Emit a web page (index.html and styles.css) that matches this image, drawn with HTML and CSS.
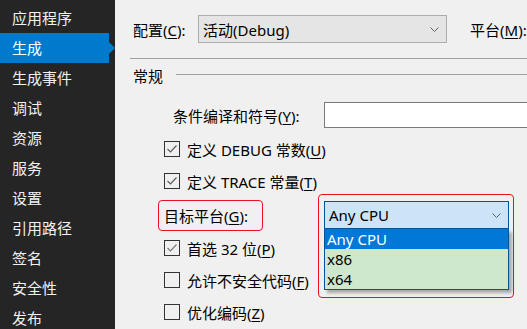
FILE: index.html
```html
<!DOCTYPE html>
<html lang="zh-CN">
<head>
<meta charset="utf-8">
<title>生成</title>
<link rel="stylesheet" href="styles.css">
</head>
<body>
<div class="app">
  <nav class="sidebar">
    <div class="nav-item">应用程序</div>
    <div class="nav-item active">生成</div>
    <div class="nav-item">生成事件</div>
    <div class="nav-item">调试</div>
    <div class="nav-item">资源</div>
    <div class="nav-item">服务</div>
    <div class="nav-item">设置</div>
    <div class="nav-item">引用路径</div>
    <div class="nav-item">签名</div>
    <div class="nav-item">安全性</div>
    <div class="nav-item">发布</div>
  </nav>
  <main class="main">
    <div class="config-row">
      <span class="config-label">配置(<u>C</u>):</span>
      <div class="select top-select">
        <span class="select-text">活动(Debug)</span>
        <svg class="chevron" width="9" height="5" viewBox="0 0 9 5"><path d="M0.5 0.5 L4.5 4.5 L8.5 0.5" fill="none" stroke="#606060" stroke-width="1"/></svg>
      </div>
      <span class="platform-label">平台(<u>M</u>):</span>
    </div>
    <div class="sep"></div>
    <div class="section-head">
      <span class="section-title">常规</span>
      <div class="section-line"></div>
    </div>
    <div class="symbols-row">
      <span class="symbols-label">条件编译和符号(<u>Y</u>):</span>
      <div class="text-input"></div>
    </div>
    <div class="check-row">
      <span class="checkbox"><svg width="14" height="14" viewBox="0 0 14 14"><path d="M2.5 7 L5.5 10 L11.5 3.5" fill="none" stroke="#5a5a5a" stroke-width="1.2"/></svg></span>
      <span>定义 DEBUG 常数(<u>U</u>)</span>
    </div>
    <div class="check-row">
      <span class="checkbox"><svg width="14" height="14" viewBox="0 0 14 14"><path d="M2.5 7 L5.5 10 L11.5 3.5" fill="none" stroke="#5a5a5a" stroke-width="1.2"/></svg></span>
      <span>定义 TRACE 常量(<u>T</u>)</span>
    </div>
    <div class="target-row">
      <div class="target-label">目标平台(<u>G</u>):</div>
      <div class="combo-wrap">
        <div class="select combo">
          <span class="select-text">Any CPU</span>
          <svg class="chevron" width="9" height="5" viewBox="0 0 9 5"><path d="M0.5 0.5 L4.5 4.5 L8.5 0.5" fill="none" stroke="#606060" stroke-width="1"/></svg>
        </div>
        <div class="combo-list">
          <div class="combo-option selected">Any CPU</div>
          <div class="combo-option">x86</div>
          <div class="combo-option">x64</div>
        </div>
        <div class="highlight-box"></div>
      </div>
    </div>
    <div class="check-row tight">
      <span class="checkbox"><svg width="14" height="14" viewBox="0 0 14 14"><path d="M2.5 7 L5.5 10 L11.5 3.5" fill="none" stroke="#7a7a7a" stroke-width="1.2"/></svg></span>
      <span>首选 32 位(<u>P</u>)</span>
    </div>
    <div class="check-row">
      <span class="checkbox"></span>
      <span>允许不安全代码(<u>F</u>)</span>
    </div>
    <div class="check-row">
      <span class="checkbox"></span>
      <span>优化编码(<u>Z</u>)</span>
    </div>
  </main>
</div>
</body>
</html>
```

FILE: styles.css
```css
html, body {
  margin: 0;
  padding: 0;
}
body {
  width: 527px;
  height: 329px;
  overflow: hidden;
  font-family: "Noto Sans", "Noto Sans CJK SC", sans-serif;
  font-size: 15px;
  color: #000;
}
u {
  text-decoration-thickness: 1px;
  text-underline-offset: 2px;
}
.app {
  display: flex;
  width: 527px;
  height: 329px;
}
.sidebar {
  width: 115px;
  flex: none;
  background: #252526;
  padding-top: 3px;
  box-sizing: border-box;
}
.nav-item {
  height: 30px;
  line-height: 30px;
  padding-left: 12px;
  color: #f1f1f1;
  white-space: nowrap;
  margin-right: 6px;
  position: relative;
}
.nav-item.active {
  background: #007acc;
  color: #fff;
}
.nav-item.active::after {
  content: "";
  position: absolute;
  right: -6px;
  top: 9px;
  border-top: 6px solid transparent;
  border-bottom: 6px solid transparent;
  border-left: 6px solid #007acc;
}
.main {
  flex: 1;
  background: #f0f0f0;
  overflow: hidden;
  padding-top: 15px;
  white-space: nowrap;
}
.config-row {
  display: flex;
  align-items: center;
  height: 28px;
  padding-left: 18px;
}
.config-label {
  width: 65px;
  flex: none;
}
.select {
  display: flex;
  align-items: center;
  box-sizing: border-box;
  flex: none;
}
.select-text {
  flex: 1;
}
.top-select {
  width: 249px;
  height: 28px;
  background: #e5e5e5;
  border: 1px solid #adadad;
  padding: 0 7px 0 4px;
}
.platform-label {
  margin-left: 23px;
}
.sep {
  height: 1px;
  background: #a0a0a0;
  margin: 15px 0 0 15px;
}
.section-head {
  display: flex;
  align-items: center;
  height: 32px;
  padding-left: 18px;
}
.section-line {
  flex: 1;
  height: 1px;
  background: #a0a0a0;
  margin-left: 13px;
  margin-top: -1px;
}
.symbols-row {
  display: flex;
  align-items: center;
  height: 26px;
  margin-top: 11px;
  padding-left: 58px;
}
.symbols-label {
  width: 151px;
  flex: none;
}
.text-input {
  width: 260px;
  height: 26px;
  flex: none;
  box-sizing: border-box;
  background: #fff;
  border: 1px solid #7a7a7a;
}
.check-row {
  display: flex;
  align-items: center;
  height: 32px;
  padding-left: 49px;
}
.symbols-row + .check-row {
  margin-top: 5px;
}
.checkbox {
  width: 16px;
  height: 16px;
  box-sizing: border-box;
  border: 1px solid #333;
  margin-right: 7px;
  flex: none;
  display: flex;
  align-items: center;
  justify-content: center;
}
.target-row {
  display: flex;
  align-items: flex-start;
  height: 35px;
  padding-top: 3px;
  box-sizing: border-box;
  padding-left: 43px;
}
.target-label {
  width: 105px;
  height: 31px;
  box-sizing: border-box;
  border: 1px solid #e81123;
  border-radius: 4px;
  padding-left: 5px;
  display: flex;
  align-items: center;
  flex: none;
}
.combo-wrap {
  position: relative;
  margin-left: 61px;
  margin-top: 1px;
}
.combo {
  width: 185px;
  height: 28px;
  background: #cce4f7;
  border: 1px solid #005499;
  padding: 0 7px 0 4px;
}
.combo-list {
  position: absolute;
  left: 0;
  top: 28px;
  width: 185px;
  box-sizing: border-box;
  border: 1px solid #005499;
  border-top: none;
  background: #cde8cd;
  box-shadow: 3px 3px 3px rgba(0, 0, 0, 0.3);
  z-index: 2;
}
.combo-option {
  height: 20px;
  line-height: 20px;
  padding-left: 2px;
}
.combo-option.selected {
  background: #0078d7;
  color: #fff;
}
.highlight-box {
  position: absolute;
  left: -6px;
  top: -7px;
  width: 196px;
  height: 104px;
  box-sizing: border-box;
  border: 1px solid #e81123;
  border-radius: 4px;
  z-index: 3;
  pointer-events: none;
}
```
